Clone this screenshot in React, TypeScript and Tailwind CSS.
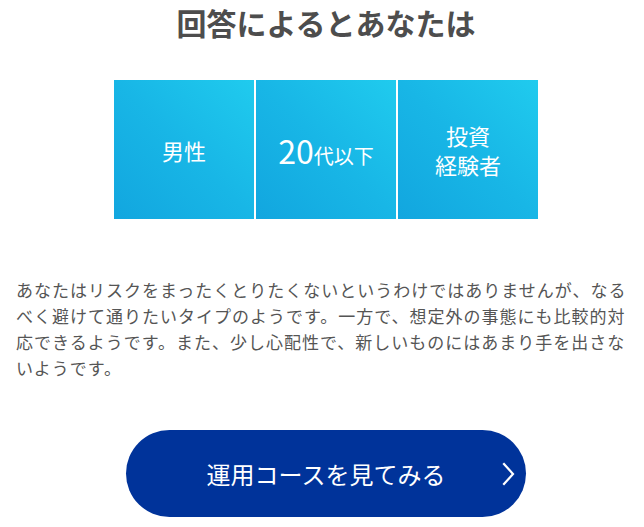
const font = { fontFamily: '"Noto Sans CJK JP", "Noto Sans", sans-serif' };

function Tile({ children }: { children: React.ReactNode }) {
  return (
    <div className="flex h-[139px] w-[140px] items-center justify-center bg-linear-to-tr from-[#12a6df] via-[#18b6e6] to-[#20cbee] text-center text-white">
      {children}
    </div>
  );
}

const lines = [
  "あなたはリスクをまったくとりたくないというわけではありませんが、なる",
  "べく避けて通りたいタイプのようです。一方で、想定外の事態にも比較的対",
  "応できるようです。また、少し心配性で、新しいものにはあまり手を出さな",
  "いようです。",
];

export default function App() {
  return (
    <main className="w-[644px] bg-white" style={font}>
      <h1 className="pl-[8px] pt-[1px] text-center text-[30px] font-bold leading-[42px] text-[#4d4d4d]">
        回答によるとあなたは
      </h1>

      <div className="mt-[37px] flex justify-center gap-[2px] pl-[8px]">
        <Tile>
          <span className="text-[22px] leading-none">男性</span>
        </Tile>
        <Tile>
          <span className="leading-none">
            <span className="text-[32px]">20</span>
            <span className="text-[20px]">代以下</span>
          </span>
        </Tile>
        <Tile>
          <span className="text-[22px] leading-[29px]">
            投資
            <br />
            経験者
          </span>
        </Tile>
      </div>

      <p className="mt-[58px] px-[16px] text-[17px] leading-[26px] tracking-[1px] text-[#555555]">
        {lines.map((l, i) => (
          <span key={i} className="block whitespace-nowrap">
            {l}
          </span>
        ))}
      </p>

      <div className="mt-[49px] flex justify-center pb-[9px] pl-[8px]">
        <button className="relative flex h-[87px] w-[400px] items-center justify-center rounded-full bg-[#00339a] text-[24px] text-white">
          運用コースを見てみる
          <svg
            className="absolute right-[10px] top-1/2 -translate-y-1/2"
            width="16"
            height="26"
            viewBox="0 0 16 26"
            fill="none"
            stroke="white"
            strokeWidth="2.2"
            strokeLinecap="square"
          >
            <path d="M4 3l9 10-9 10" />
          </svg>
        </button>
      </div>
    </main>
  );
}
